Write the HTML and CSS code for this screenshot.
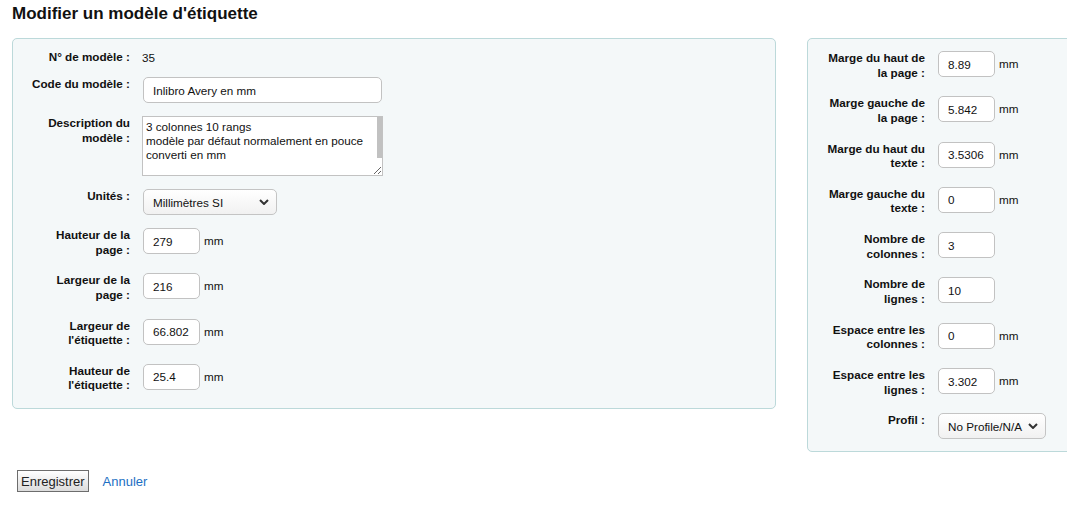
FILE: index.html
```html
<!DOCTYPE html>
<html lang="fr">
<head>
<meta charset="utf-8">
<title>Modifier un modèle d'étiquette</title>
<link rel="stylesheet" href="styles.css">
</head>
<body>
<main class="page">
  <h1 class="title">Modifier un modèle d'étiquette</h1>
  <form class="form">
    <div class="columns">
      <fieldset class="box box-left">
        <ol class="rows">
          <li class="row row-static"><label class="lbl">N° de modèle :</label><span class="static">35</span></li>
          <li class="row"><label class="lbl">Code du modèle :</label><input class="inp inp-wide" type="text" value="Inlibro Avery en mm"></li>
          <li class="row"><label class="lbl">Description du<br>modèle :</label><span class="area-wrap"><textarea class="area">3 colonnes 10 rangs
modèle par défaut normalement en pouce
converti en mm</textarea><span class="area-thumb"></span></span></li>
          <li class="row"><label class="lbl">Unités :</label><span class="sel-wrap sel-units"><select class="sel"><option>Millimètres SI</option></select><svg class="chev" viewBox="0 0 10 6" width="10" height="6"><path d="M1 1l4 4 4-4" fill="none" stroke="#333" stroke-width="2"/></svg></span></li>
          <li class="row"><label class="lbl">Hauteur de la<br>page :</label><input class="inp" type="text" value="279"><span class="unit">mm</span></li>
          <li class="row"><label class="lbl">Largeur de la<br>page :</label><input class="inp" type="text" value="216"><span class="unit">mm</span></li>
          <li class="row"><label class="lbl">Largeur de<br>l'étiquette :</label><input class="inp" type="text" value="66.802"><span class="unit">mm</span></li>
          <li class="row"><label class="lbl">Hauteur de<br>l'étiquette :</label><input class="inp" type="text" value="25.4"><span class="unit">mm</span></li>
        </ol>
      </fieldset>
      <fieldset class="box box-right">
        <ol class="rows">
          <li class="row"><label class="lbl">Marge du haut de<br>la page :</label><input class="inp" type="text" value="8.89"><span class="unit">mm</span></li>
          <li class="row"><label class="lbl">Marge gauche de<br>la page :</label><input class="inp" type="text" value="5.842"><span class="unit">mm</span></li>
          <li class="row"><label class="lbl">Marge du haut du<br>texte :</label><input class="inp" type="text" value="3.5306"><span class="unit">mm</span></li>
          <li class="row"><label class="lbl">Marge gauche du<br>texte :</label><input class="inp" type="text" value="0"><span class="unit">mm</span></li>
          <li class="row"><label class="lbl">Nombre de<br>colonnes :</label><input class="inp" type="text" value="3"></li>
          <li class="row"><label class="lbl">Nombre de<br>lignes :</label><input class="inp" type="text" value="10"></li>
          <li class="row"><label class="lbl">Espace entre les<br>colonnes :</label><input class="inp" type="text" value="0"><span class="unit">mm</span></li>
          <li class="row"><label class="lbl">Espace entre les<br>lignes :</label><input class="inp" type="text" value="3.302"><span class="unit">mm</span></li>
          <li class="row"><label class="lbl">Profil :</label><span class="sel-wrap sel-profile"><select class="sel"><option>No Profile/N/A</option></select><svg class="chev" viewBox="0 0 10 6" width="10" height="6"><path d="M1 1l4 4 4-4" fill="none" stroke="#333" stroke-width="2"/></svg></span></li>
        </ol>
      </fieldset>
    </div>
    <div class="actions">
      <button class="btn" type="button">Enregistrer</button>
      <a class="cancel" href="#">Annuler</a>
    </div>
  </form>
</main>
</body>
</html>
```

FILE: styles.css
```css
html, body {
  margin: 0;
  padding: 0;
  overflow: hidden;
  background: #ffffff;
}
body {
  font-family: "Liberation Sans", Arial, sans-serif;
  color: #111;
}
.page {
  padding: 0 12px;
}
.title {
  font-size: 17px;
  font-weight: bold;
  margin: 4px 0 15px;
  line-height: 19px;
  color: #111;
}
.columns {
  display: flex;
  align-items: flex-start;
  gap: 31px;
  width: 1200px;
}
.box {
  margin: 0;
  border: 1px solid #bcd9da;
  border-radius: 5px;
  background: #f4f8f9;
  padding: 12px 12px 12px;
  min-width: 0;
}
.box-left {
  width: 764px;
  box-sizing: border-box;
}
.box-right {
  width: 300px;
  box-sizing: border-box;
}
.rows {
  list-style: none;
  margin: 0;
  padding: 0;
}
.row {
  display: flex;
  align-items: flex-start;
  margin-bottom: 13px;
  font-size: 11.7px;
}
.row:last-child {
  margin-bottom: 0;
}
.row-static {
  margin-bottom: 12px;
}
.lbl {
  flex: 0 0 105px;
  width: 105px;
  margin-right: 13px;
  text-align: right;
  white-space: nowrap;
  font-weight: bold;
  line-height: 14.5px;
  padding-bottom: 3.3px;
  color: #111;
}
.row-static .lbl {
  padding-bottom: 0;
  margin-top: -1px;
}
.static {
  line-height: 15px;
  margin-left: -1px;
  margin-top: -1px;
}
.inp {
  box-sizing: border-box;
  width: 57px;
  height: 26px;
  margin: 0;
  border: 1px solid #c2c2c2;
  border-radius: 5px;
  padding: 0 0 0 9px;
  font: 11.7px "Liberation Sans", Arial, sans-serif;
  color: #111;
  background: #fff;
}
.inp-wide {
  width: 239px;
}
.unit {
  margin-left: 4px;
  line-height: 26px;
}
.area-wrap {
  position: relative;
  display: inline-block;
  margin-left: -1px;
  line-height: 0;
}
.area {
  box-sizing: border-box;
  width: 241px;
  height: 60px;
  margin: 0;
  padding: 3px 3px;
  border: 1px solid #c2c2c2;
  border-radius: 0;
  font: 11.7px/14px "Liberation Sans", Arial, sans-serif;
  color: #111;
  background: #fff;
  overflow: hidden;
  resize: both;
}
.area-thumb {
  position: absolute;
  top: 1px;
  right: 1px;
  width: 5px;
  height: 41px;
  background: #c1c1c1;
}
.sel-wrap {
  position: relative;
  display: inline-block;
}
.sel {
  -webkit-appearance: none;
  appearance: none;
  box-sizing: border-box;
  height: 26px;
  margin: 0;
  border: 1px solid #c4c4c4;
  border-radius: 5px;
  padding: 0 0 0 9px;
  font: 11.7px "Liberation Sans", Arial, sans-serif;
  color: #111;
  background: linear-gradient(#ffffff, #f1f1f1);
}
.sel-units .sel {
  width: 134px;
}
.sel-profile .sel {
  width: 108px;
}
.chev {
  position: absolute;
  top: 10px;
  right: 8px;
  pointer-events: none;
}
.actions {
  display: flex;
  align-items: center;
  margin-top: 18px;
  padding-left: 5px;
}
.btn {
  box-sizing: border-box;
  height: 22px;
  padding: 0 3px;
  border: 1px solid #6d6d6d;
  border-radius: 0;
  background: linear-gradient(#ffffff, #dcdcdc);
  font: 13px "Liberation Sans", Arial, sans-serif;
  color: #222;
}
.cancel {
  margin-left: 14px;
  font-size: 13px;
  color: #1c6fc3;
  text-decoration: none;
}
```
